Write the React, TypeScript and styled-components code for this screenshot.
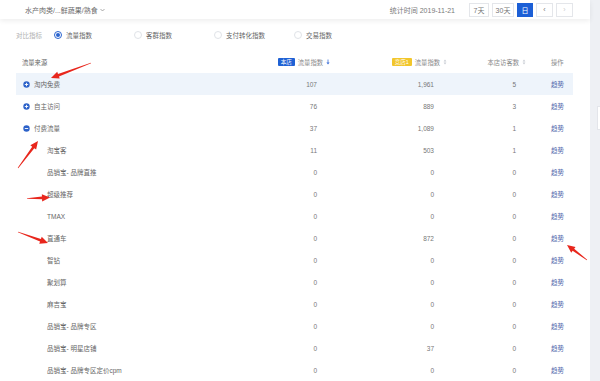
import React from 'react';
import styled, { createGlobalStyle } from 'styled-components';

const GlobalStyle = createGlobalStyle`
  html, body {
    margin: 0;
    padding: 0;
    background: #eef0f4;
  }
  body {
    font-family: 'Liberation Sans', 'Noto Sans CJK SC', sans-serif;
  }
`;

const Page = styled.div`
  position: relative;
  display: flex;
  width: 600px;
  height: 381px;
  overflow: hidden;
  background: #eef0f4;
`;

const Main = styled.div`
  width: 590px;
  background: #fff;
  display: flex;
  flex-direction: column;
`;

const Side = styled.div`
  flex: 1;
  display: flex;
  flex-direction: column;
  padding-top: 106px;
  padding-left: 7px;
`;

const SideCard = styled.div`
  height: 22px;
  background: #fff;
  border: 1px solid #e3e5ea;
  border-right: none;
`;

const TopBar = styled.div`
  height: 20px;
  display: flex;
  align-items: center;
  padding: 0 17px 0 25px;
  font-size: 7px;
  color: #555;
  box-shadow: 0 2px 5px rgba(0, 0, 0, 0.07);
  position: relative;
  z-index: 1;
`;

const Crumb = styled.span`
  display: flex;
  align-items: center;
  gap: 2px;
  color: #6a6a6a;
`;

const Spacer = styled.div`
  flex: 1;
`;

const StatTime = styled.span`
  color: #7a7a7a;
  margin-right: 14px;
`;

const BtnGroup = styled.div`
  display: flex;
  gap: 3px;
`;

const RangeBtn = styled.div<{ $active?: boolean; $w: number; $disabled?: boolean }>`
  width: ${(p) => p.$w}px;
  height: 14px;
  box-sizing: border-box;
  display: flex;
  align-items: center;
  justify-content: center;
  border: 1px solid ${(p) => (p.$active ? '#1c5fd6' : '#e4e6ea')};
  background: ${(p) => (p.$active ? '#1c5fd6' : '#fff')};
  color: ${(p) => (p.$active ? '#fff' : p.$disabled ? '#ccc' : '#777')};
  font-size: 7px;
`;

const RadioRow = styled.div`
  height: 33px;
  display: flex;
  align-items: center;
  padding-left: 16px;
  font-size: 6.5px;
`;

const RadioLabel = styled.span`
  color: #b0b0b0;
  width: 38px;
`;

const RadioOption = styled.div`
  width: 80px;
  display: flex;
  align-items: center;
  gap: 4px;
  color: #666;
`;

const RadioDot = styled.span<{ $checked?: boolean }>`
  width: 8px;
  height: 8px;
  box-sizing: border-box;
  border-radius: 50%;
  border: 1px solid ${(p) => (p.$checked ? '#2a64cf' : '#e0e3e8')};
  display: flex;
  align-items: center;
  justify-content: center;
  &::after {
    content: '';
    width: 4px;
    height: 4px;
    border-radius: 50%;
    background: ${(p) => (p.$checked ? '#2a64cf' : 'transparent')};
  }
`;

const Table = styled.div`
  margin-left: 16px;
  width: 557px;
  display: flex;
  flex-direction: column;
`;

const Row = styled.div<{ $hl?: boolean }>`
  display: grid;
  grid-template-columns: 244px 80px 110px 80px 43px;
  height: 22px;
  align-items: center;
  background: ${(p) => (p.$hl ? '#eef4fb' : 'transparent')};
  font-size: 6.5px;
  color: #777;
`;

const HeadRow = styled(Row)`
  color: #8a8a8a;
  font-size: 6.3px;
`;

const SourceCell = styled.div<{ $indent: number }>`
  display: flex;
  align-items: center;
  gap: 4px;
  padding-left: ${(p) => p.$indent}px;
  color: #666;
`;

const NumCell = styled.div<{ $pr: number }>`
  text-align: right;
  padding-right: ${(p) => p.$pr}px;
`;

const HeadCell = styled.div<{ $pr: number }>`
  display: flex;
  justify-content: flex-end;
  align-items: center;
  gap: 3px;
  padding-right: ${(p) => p.$pr}px;
`;

const OpCell = styled.div`
  padding-left: 21px;
`;

const Link = styled.span`
  color: #5068ac;
`;

const Tag = styled.span<{ $yellow?: boolean }>`
  display: inline-flex;
  align-items: center;
  justify-content: center;
  height: 8px;
  padding: 0 3px;
  font-size: 5.5px;
  color: #fff;
  background: ${(p) => (p.$yellow ? '#f2c62b' : '#1f61d4')};
  border-radius: 1px;
`;

const Overlay = styled.svg`
  position: absolute;
  left: 0;
  top: 0;
  pointer-events: none;
`;

const ExpandIcon = ({ open }: { open?: boolean }) => (
  <svg width="7" height="7" viewBox="0 0 7 7">
    <circle cx="3.5" cy="3.5" r="3.2" fill="#2d62c9" />
    <line x1="1.8" y1="3.5" x2="5.2" y2="3.5" stroke="#fff" strokeWidth="0.9" />
    {!open && <line x1="3.5" y1="1.8" x2="3.5" y2="5.2" stroke="#fff" strokeWidth="0.9" />}
  </svg>
);

const SortIcon = ({ active }: { active?: boolean }) => (
  <svg width="4" height="6" viewBox="0 0 4 6">
    {active ? (
      <>
        <line x1="2" y1="0.5" x2="2" y2="4" stroke="#3a6fd8" strokeWidth="0.8" />
        <path d="M0.4 3.4 L2 5.6 L3.6 3.4 Z" fill="#3a6fd8" />
      </>
    ) : (
      <>
        <path d="M0.6 2.4 L2 0.6 L3.4 2.4 Z" fill="#c8ccd3" />
        <path d="M0.6 3.6 L2 5.4 L3.4 3.6 Z" fill="#c8ccd3" />
      </>
    )}
  </svg>
);

type RowData = {
  name: string;
  level: 'parent' | 'child';
  open?: boolean;
  mine: string;
  rival: string;
  visitors: string;
  hl?: boolean;
};

const rows: RowData[] = [
  { name: '淘内免费', level: 'parent', mine: '107', rival: '1,961', visitors: '5', hl: true },
  { name: '自主访问', level: 'parent', mine: '76', rival: '889', visitors: '3' },
  { name: '付费流量', level: 'parent', open: true, mine: '37', rival: '1,089', visitors: '1' },
  { name: '淘宝客', level: 'child', mine: '11', rival: '503', visitors: '1' },
  { name: '品销宝- 品牌直推', level: 'child', mine: '0', rival: '0', visitors: '0' },
  { name: '超级推荐', level: 'child', mine: '0', rival: '0', visitors: '0' },
  { name: 'TMAX', level: 'child', mine: '0', rival: '0', visitors: '0' },
  { name: '直通车', level: 'child', mine: '0', rival: '872', visitors: '0' },
  { name: '智钻', level: 'child', mine: '0', rival: '0', visitors: '0' },
  { name: '聚划算', level: 'child', mine: '0', rival: '0', visitors: '0' },
  { name: '麻吉宝', level: 'child', mine: '0', rival: '0', visitors: '0' },
  { name: '品销宝- 品牌专区', level: 'child', mine: '0', rival: '0', visitors: '0' },
  { name: '品销宝- 明星店铺', level: 'child', mine: '0', rival: '37', visitors: '0' },
  { name: '品销宝- 品牌专区定价cpm', level: 'child', mine: '0', rival: '0', visitors: '0' },
];

// red annotation arrows drawn over the screenshot
const arrows = [
  { x1: 91, y1: 63, x2: 51, y2: 78 },
  { x1: 18, y1: 168, x2: 38, y2: 141 },
  { x1: 27, y1: 198.5, x2: 50, y2: 197.5 },
  { x1: 18, y1: 232, x2: 48, y2: 243 },
  { x1: 587, y1: 260, x2: 567, y2: 245 },
];

const Arrow = ({ x1, y1, x2, y2 }: { x1: number; y1: number; x2: number; y2: number }) => {
  const dx = x2 - x1;
  const dy = y2 - y1;
  const len = Math.hypot(dx, dy);
  const ux = dx / len;
  const uy = dy / len;
  const nx = -uy;
  const ny = ux;
  const headLen = 8;
  const bx = x2 - ux * headLen;
  const by = y2 - uy * headLen;
  const shaft = [
    [x1 + nx * 0.3, y1 + ny * 0.3],
    [bx + nx * 1.3, by + ny * 1.3],
    [bx + nx * 3.6, by + ny * 3.6],
    [x2, y2],
    [bx - nx * 3.6, by - ny * 3.6],
    [bx - nx * 1.3, by - ny * 1.3],
    [x1 - nx * 0.3, y1 - ny * 0.3],
  ];
  return <polygon points={shaft.map((p) => p.join(',')).join(' ')} fill="#e8261c" />;
};

export default function App() {
  return (
    <>
      <GlobalStyle />
      <Page>
        <Main>
          <TopBar>
            <Crumb>
              水产肉类/...鲜蔬果/熟食
              <svg width="5" height="4" viewBox="0 0 5 4">
                <path d="M0.5 1 L2.5 3 L4.5 1" stroke="#888" strokeWidth="0.7" fill="none" />
              </svg>
            </Crumb>
            <Spacer />
            <StatTime>统计时间 2019-11-21</StatTime>
            <BtnGroup>
              <RangeBtn $w={20}>7天</RangeBtn>
              <RangeBtn $w={22}>30天</RangeBtn>
              <RangeBtn $w={16} $active>日</RangeBtn>
              <RangeBtn $w={17}>&lsaquo;</RangeBtn>
              <RangeBtn $w={17} $disabled>&rsaquo;</RangeBtn>
            </BtnGroup>
          </TopBar>
          <RadioRow>
            <RadioLabel>对比指标</RadioLabel>
            <RadioOption>
              <RadioDot $checked />
              流量指数
            </RadioOption>
            <RadioOption>
              <RadioDot />
              客群指数
            </RadioOption>
            <RadioOption>
              <RadioDot />
              支付转化指数
            </RadioOption>
            <RadioOption>
              <RadioDot />
              交易指数
            </RadioOption>
          </RadioRow>
          <Table>
            <HeadRow>
              <SourceCell $indent={6}>流量来源</SourceCell>
              <HeadCell $pr={10}>
                <Tag>本店</Tag>
                流量指数
                <SortIcon active />
              </HeadCell>
              <HeadCell $pr={3}>
                <Tag $yellow>竞店1</Tag>
                流量指数
                <SortIcon />
              </HeadCell>
              <HeadCell $pr={4}>
                本店访客数
                <SortIcon />
              </HeadCell>
              <OpCell>操作</OpCell>
            </HeadRow>
            {rows.map((r) => (
              <Row key={r.name} $hl={r.hl}>
                <SourceCell $indent={r.level === 'parent' ? 7 : 31}>
                  {r.level === 'parent' && <ExpandIcon open={r.open} />}
                  {r.name}
                </SourceCell>
                <NumCell $pr={23}>{r.mine}</NumCell>
                <NumCell $pr={16}>{r.rival}</NumCell>
                <NumCell $pr={14}>{r.visitors}</NumCell>
                <OpCell>
                  <Link>趋势</Link>
                </OpCell>
              </Row>
            ))}
          </Table>
        </Main>
        <Side>
          <SideCard />
        </Side>
        <Overlay width="600" height="381" viewBox="0 0 600 381">
          {arrows.map((a, i) => (
            <Arrow key={i} {...a} />
          ))}
        </Overlay>
      </Page>
    </>
  );
}
